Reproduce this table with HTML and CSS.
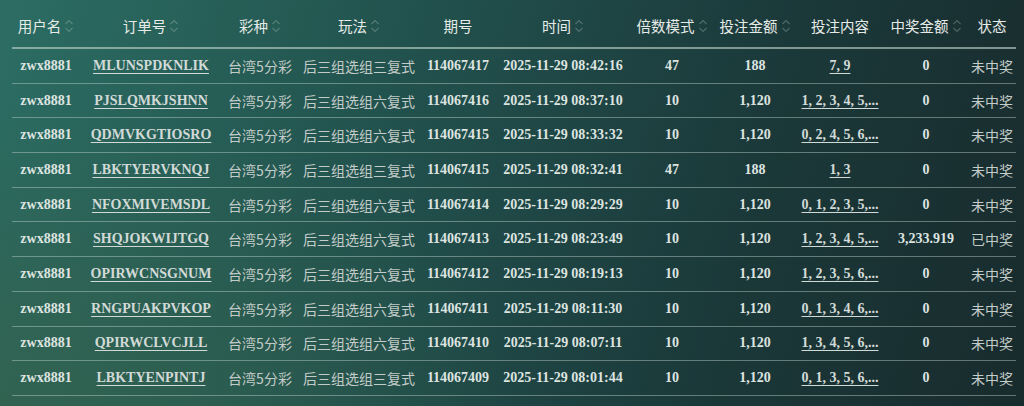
FILE: index.html
```html
<!DOCTYPE html>
<html lang="zh-CN">
<head>
<meta charset="utf-8">
<title>投注记录</title>
<link rel="stylesheet" href="styles.css">
</head>
<body>
<div class="page">
  <table class="bets">
    <colgroup>
      <col class="c-user"><col class="c-order"><col class="c-lottery"><col class="c-play"><col class="c-issue"><col class="c-time"><col class="c-mult"><col class="c-amount"><col class="c-content"><col class="c-win"><col class="c-status">
    </colgroup>
    <thead>
      <tr>
        <th><span class="h">用户名<svg class="sort" viewBox="0 0 10 18"><path d="M1.5 7L5 3.5L8.5 7M1.5 11L5 14.5L8.5 11"/></svg></span></th>
        <th><span class="h">订单号<svg class="sort" viewBox="0 0 10 18"><path d="M1.5 7L5 3.5L8.5 7M1.5 11L5 14.5L8.5 11"/></svg></span></th>
        <th><span class="h">彩种<svg class="sort" viewBox="0 0 10 18"><path d="M1.5 7L5 3.5L8.5 7M1.5 11L5 14.5L8.5 11"/></svg></span></th>
        <th><span class="h">玩法<svg class="sort" viewBox="0 0 10 18"><path d="M1.5 7L5 3.5L8.5 7M1.5 11L5 14.5L8.5 11"/></svg></span></th>
        <th><span class="h">期号</span></th>
        <th><span class="h">时间<svg class="sort" viewBox="0 0 10 18"><path d="M1.5 7L5 3.5L8.5 7M1.5 11L5 14.5L8.5 11"/></svg></span></th>
        <th><span class="h">倍数模式<svg class="sort" viewBox="0 0 10 18"><path d="M1.5 7L5 3.5L8.5 7M1.5 11L5 14.5L8.5 11"/></svg></span></th>
        <th><span class="h">投注金额<svg class="sort" viewBox="0 0 10 18"><path d="M1.5 7L5 3.5L8.5 7M1.5 11L5 14.5L8.5 11"/></svg></span></th>
        <th><span class="h">投注内容</span></th>
        <th><span class="h">中奖金额<svg class="sort" viewBox="0 0 10 18"><path d="M1.5 7L5 3.5L8.5 7M1.5 11L5 14.5L8.5 11"/></svg></span></th>
        <th><span class="h">状态</span></th>
      </tr>
    </thead>
    <tbody>
      <tr><td class="b">zwx8881</td><td><a class="link b">MLUNSPDKNLIK</a></td><td class="cn">台湾5分彩</td><td class="cn">后三组选组三复式</td><td class="b">114067417</td><td class="b">2025-11-29 08:42:16</td><td class="b">47</td><td class="b">188</td><td><a class="link b">7, 9</a></td><td class="b">0</td><td class="cn">未中奖</td></tr>
      <tr><td class="b">zwx8881</td><td><a class="link b">PJSLQMKJSHNN</a></td><td class="cn">台湾5分彩</td><td class="cn">后三组选组六复式</td><td class="b">114067416</td><td class="b">2025-11-29 08:37:10</td><td class="b">10</td><td class="b">1,120</td><td><a class="link b">1, 2, 3, 4, 5,...</a></td><td class="b">0</td><td class="cn">未中奖</td></tr>
      <tr><td class="b">zwx8881</td><td><a class="link b">QDMVKGTIOSRO</a></td><td class="cn">台湾5分彩</td><td class="cn">后三组选组六复式</td><td class="b">114067415</td><td class="b">2025-11-29 08:33:32</td><td class="b">10</td><td class="b">1,120</td><td><a class="link b">0, 2, 4, 5, 6,...</a></td><td class="b">0</td><td class="cn">未中奖</td></tr>
      <tr><td class="b">zwx8881</td><td><a class="link b">LBKTYERVKNQJ</a></td><td class="cn">台湾5分彩</td><td class="cn">后三组选组三复式</td><td class="b">114067415</td><td class="b">2025-11-29 08:32:41</td><td class="b">47</td><td class="b">188</td><td><a class="link b">1, 3</a></td><td class="b">0</td><td class="cn">未中奖</td></tr>
      <tr><td class="b">zwx8881</td><td><a class="link b">NFOXMIVEMSDL</a></td><td class="cn">台湾5分彩</td><td class="cn">后三组选组六复式</td><td class="b">114067414</td><td class="b">2025-11-29 08:29:29</td><td class="b">10</td><td class="b">1,120</td><td><a class="link b">0, 1, 2, 3, 5,...</a></td><td class="b">0</td><td class="cn">未中奖</td></tr>
      <tr><td class="b">zwx8881</td><td><a class="link b">SHQJOKWIJTGQ</a></td><td class="cn">台湾5分彩</td><td class="cn">后三组选组六复式</td><td class="b">114067413</td><td class="b">2025-11-29 08:23:49</td><td class="b">10</td><td class="b">1,120</td><td><a class="link b">1, 2, 3, 4, 5,...</a></td><td class="b">3,233.919</td><td class="cn">已中奖</td></tr>
      <tr><td class="b">zwx8881</td><td><a class="link b">OPIRWCNSGNUM</a></td><td class="cn">台湾5分彩</td><td class="cn">后三组选组六复式</td><td class="b">114067412</td><td class="b">2025-11-29 08:19:13</td><td class="b">10</td><td class="b">1,120</td><td><a class="link b">1, 2, 3, 5, 6,...</a></td><td class="b">0</td><td class="cn">未中奖</td></tr>
      <tr><td class="b">zwx8881</td><td><a class="link b">RNGPUAKPVKOP</a></td><td class="cn">台湾5分彩</td><td class="cn">后三组选组六复式</td><td class="b">114067411</td><td class="b">2025-11-29 08:11:30</td><td class="b">10</td><td class="b">1,120</td><td><a class="link b">0, 1, 3, 4, 6,...</a></td><td class="b">0</td><td class="cn">未中奖</td></tr>
      <tr><td class="b">zwx8881</td><td><a class="link b">QPIRWCLVCJLL</a></td><td class="cn">台湾5分彩</td><td class="cn">后三组选组六复式</td><td class="b">114067410</td><td class="b">2025-11-29 08:07:11</td><td class="b">10</td><td class="b">1,120</td><td><a class="link b">1, 3, 4, 5, 6,...</a></td><td class="b">0</td><td class="cn">未中奖</td></tr>
      <tr><td class="b">zwx8881</td><td><a class="link b">LBKTYENPINTJ</a></td><td class="cn">台湾5分彩</td><td class="cn">后三组选组三复式</td><td class="b">114067409</td><td class="b">2025-11-29 08:01:44</td><td class="b">10</td><td class="b">1,120</td><td><a class="link b">0, 1, 3, 5, 6,...</a></td><td class="b">0</td><td class="cn">未中奖</td></tr>
    </tbody>
  </table>
</div>
</body>
</html>
```
FILE: styles.css
```css
html, body {
  margin: 0;
  padding: 0;
}
body {
  width: 1024px;
  height: 406px;
  overflow: hidden;
  background:
    radial-gradient(ellipse 520px 300px at 0% 100%, rgba(52, 98, 78, 0.8), rgba(52, 98, 78, 0) 100%),
    linear-gradient(105deg, #2c6d63 0%, #255b54 25%, #1f4846 50%, #1b3839 72%, #182b2d 100%);
  font-family: "Liberation Serif", "Noto Sans CJK SC", serif;
  color: #dfe5e2;
}
.page {
  padding: 0 8px 0 12px;
}
.bets {
  width: 1004px;
  table-layout: fixed;
  border-collapse: separate;
  border-spacing: 0;
}
.c-user { width: 68px; }
.c-order { width: 142px; }
.c-lottery { width: 76px; }
.c-play { width: 122px; }
.c-issue { width: 76px; }
.c-time { width: 134px; }
.c-mult { width: 84px; }
.c-amount { width: 82px; }
.c-content { width: 88px; }
.c-win { width: 84px; }
.c-status { width: 48px; }

.bets th {
  height: 49px;
  padding: 4px 0 0;
  box-sizing: border-box;
  border-bottom: 2px solid rgba(190, 210, 204, 0.62);
  font-family: "Noto Sans CJK SC", sans-serif;
  font-weight: 400;
  font-size: 14.5px;
  color: #e6ebe8;
  text-align: center;
  white-space: nowrap;
}
.h {
  display: inline-flex;
  align-items: center;
  gap: 3px;
}
.sort {
  width: 10px;
  height: 18px;
  fill: none;
  stroke: rgba(190, 205, 200, 0.32);
  stroke-width: 1.1;
}
.bets td {
  height: 34.7px;
  padding: 0;
  box-sizing: border-box;
  border-bottom: 1px solid rgba(190, 210, 204, 0.45);
  text-align: center;
  white-space: nowrap;
  font-size: 14px;
}
.b {
  font-family: "Liberation Serif", serif;
  font-weight: 700;
  color: #dde4e0;
}
.cn {
  font-family: "Noto Sans CJK SC", sans-serif;
  font-weight: 400;
  font-size: 13.5px;
  color: #c3ccc8;
}
.link {
  color: #d2dad7;
  text-decoration: underline;
  text-decoration-thickness: 1px;
  text-underline-offset: 3px;
  cursor: pointer;
}
```
